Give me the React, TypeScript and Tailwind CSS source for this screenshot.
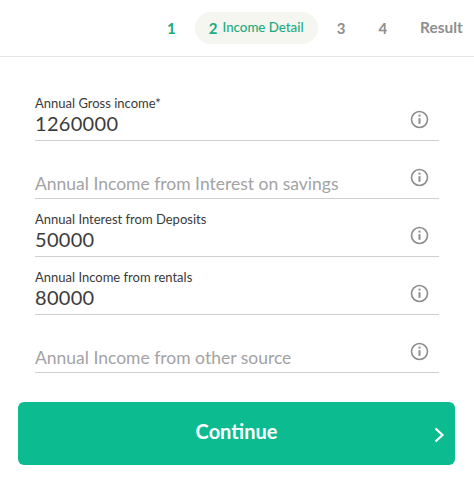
const font = "[font-family:Lato,'Liberation_Sans',sans-serif]";

function InfoIcon() {
  return (
    <svg width="19" height="19" viewBox="0 0 19 19" fill="none" stroke="#8c8c8c">
      <circle cx="9.5" cy="9.5" r="8" strokeWidth="1.6" />
      <path d="M9.5 8.2v5.6" strokeWidth="2" />
      <path d="M9.5 4.6v2" strokeWidth="2" />
    </svg>
  );
}

function Field({ label, value, placeholder }: { label?: string; value?: string; placeholder?: string }) {
  return (
    <div className="h-[58px] border-b border-[#cfcfcf] flex items-end justify-between">
      {placeholder ? (
        <div className="pb-[1px] text-[17.5px] leading-[26px] text-[#a3a3a3]">{placeholder}</div>
      ) : (
        <div className="pb-[5px]">
          <div className="text-[13px] leading-[16px] text-[#3a3a3a]">{label}</div>
          <div className="text-[20px] leading-[24px] text-[#3c3c3c] tracking-[0.3px]">{value}</div>
        </div>
      )}
      <div className="mb-[11px] mr-[10px]">
        <InfoIcon />
      </div>
    </div>
  );
}

export default function App() {
  return (
    <div className={`w-[474px] h-[486px] bg-white overflow-hidden ${font}`}>
      <div className="h-[57px] border-b border-[#e4e4e4] flex items-center font-bold">
        <span className="ml-[167px] text-[15px] text-[#1cab80]">1</span>
        <div className="ml-[19px] w-[123px] h-[32px] rounded-full bg-[#f6f6f1] flex items-center justify-center gap-[5px] text-[#1cab80]">
          <span className="text-[15px]">2</span>
          <span className="text-[13.3px] font-medium">Income Detail</span>
        </div>
        <span className="ml-[19px] text-[15px] text-[#8e8e8e]">3</span>
        <span className="ml-[33px] text-[15px] text-[#8e8e8e]">4</span>
        <span className="ml-[33px] text-[15.4px] text-[#8e8e8e]">Result</span>
      </div>
      <div className="px-[35px] pt-[26px]">
        <Field label="Annual Gross income*" value="1260000" />
        <Field placeholder="Annual Income from Interest on savings" />
        <Field label="Annual Interest from Deposits" value="50000" />
        <Field label="Annual Income from rentals" value="80000" />
        <Field placeholder="Annual Income from other source" />
      </div>
      <div className="mt-[29px] ml-[18px] w-[437px] h-[63px] rounded-[6px] bg-[#0cbb8f] relative flex items-center justify-center">
        <span className="text-white font-bold text-[20px] pb-[5px]">Continue</span>
        <svg className="absolute right-[10px] top-[25px]" width="11" height="16" viewBox="0 0 11 16" fill="none" stroke="white" strokeWidth="2.2">
          <path d="M1.5 1.5 8.5 8 1.5 14.5" />
        </svg>
      </div>
    </div>
  );
}
